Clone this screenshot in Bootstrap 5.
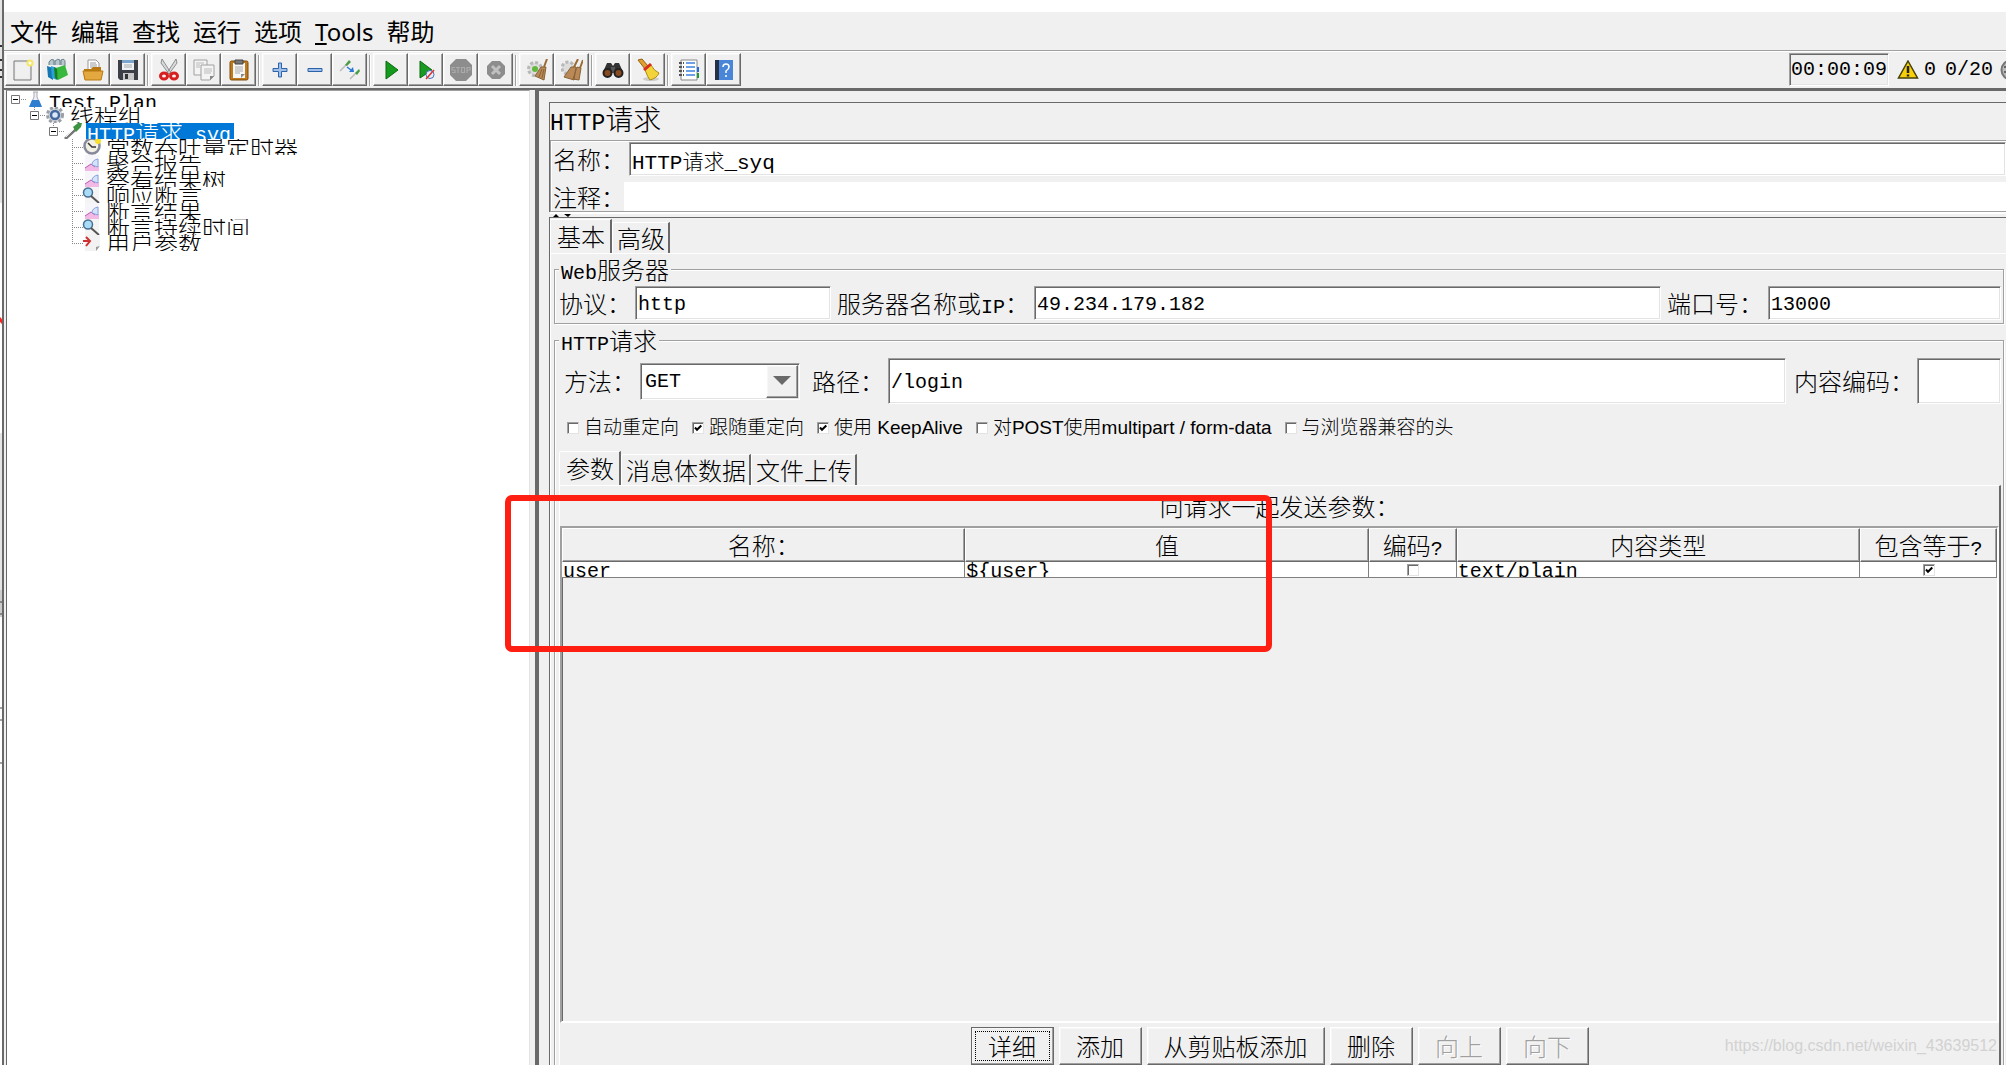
<!DOCTYPE html>
<html lang="zh-CN">
<head>
<meta charset="utf-8">
<meta name="viewport" content="width=device-width, initial-scale=1">
<title>HTTP请求</title>
<link href="https://cdn.jsdelivr.net/npm/bootstrap@5.3.0/dist/css/bootstrap.min.css" rel="stylesheet">
<style>
:root{--face:#f0f0f0;--mid:#a0a0a0;--dark:#696969;--lite:#e3e3e3}
body{font:24px/24px "Noto Sans CJK SC",sans-serif;font-weight:300;color:#000;background:#fff;overflow:hidden}
label{white-space:nowrap;flex:none}
.lat{font-family:"Liberation Mono",monospace;font-size:20px;line-height:0}
.app-col{min-width:0;border-left:2px solid var(--dark)}
.top-gap{height:12px}
.menubar{height:40px;padding-left:6px;gap:13px;background:var(--face);border-bottom:1px solid #fff;box-shadow:inset 0 -1px var(--mid)}
.menubar a{color:#000;text-decoration:none;font-family:"Noto Sans","Noto Sans CJK SC",sans-serif;font-weight:400}
.toolbar{height:36px;padding:1px 0 2px 1px;background:var(--face)}
.tgroup{margin-right:6px;position:relative}
.tgroup:not(:last-of-type)::after{content:"";position:absolute;right:-4px;top:2px;bottom:0;width:2px;background:var(--mid);border-right:1px solid #fff}
.bevel{background:var(--face);border:1px solid;border-color:#fff var(--dark) var(--dark) #fff;box-shadow:inset -1px -1px var(--mid),inset 1px 1px #f7f7f7;border-radius:0;padding:0;color:#000}
.tbtn{width:35px;height:33px;display:flex;align-items:center;justify-content:center}
.sunk,.field{border:1px solid;border-color:var(--mid) #fff #fff var(--mid);box-shadow:inset 1px 1px var(--dark),inset -1px -1px var(--lite);border-radius:0}
.status .lat{line-height:24px}
.status .clock{width:100px;height:33px;padding:0 1px}
.status .warn{margin:0 5px 0 8px}
.status .total{margin:0 7px 0 9px}
.field{background:#fff;min-width:0;height:34px;padding:4px 2px 2px;color:#000;font-family:"Liberation Mono","Noto Sans CJK SC",monospace;font-size:20px;line-height:24px;outline:0}
.field.mixed{font-size:21px;font-weight:300}
.main{min-height:0;border-top:2px solid var(--dark);background:var(--face)}
.tree-pane{width:524px;background:#fff;border-left:1px solid var(--dark);border-top:1px solid var(--mid);border-right:1px solid var(--lite);margin-left:2px}
.tree-pane ul{list-style:none;margin:0;padding:0}
.tnode{height:16px;overflow:hidden;display:flex;align-items:center;white-space:nowrap}
.tnode svg{flex:none}
.tnode .ttext{line-height:24px;margin-left:5px}
.tnode .tsel{background:#0078d7;color:#fff;width:148px;margin-left:3px;padding-left:1px}
.lv1{padding-left:4px}.lv2{padding-left:23px}.lv3{padding-left:42px}.lv4{padding-left:64px}
.split{width:5px}
.work{min-width:0;border-left:4px solid var(--dark);border-top:1px solid var(--dark);padding:11px 0 0 10px}
.frame-box{border-left:1px solid var(--dark);border-top:1px solid var(--dark);min-height:0}
.ptitle{height:37px;font-size:28px;line-height:31px;font-weight:300}
.ptitle .lat{font-size:23px}
.namebox{border:1px solid var(--mid);border-right:0;box-shadow:inset 1px 1px #fff,0 2px #fff;padding-top:1px}
.namebox label{width:78px;padding-left:2px}
.namebox .notes{margin-top:6px}
.namebox .notes label{width:73px}
.comment{border:0;height:29px;box-shadow:none}
.grip{height:5px;padding:2px 0 0 3px}
.grip svg{display:block}
.tabs{height:35px;border:0;align-items:flex-end;flex-wrap:nowrap}
.tabs .nav-link{color:#000;border:0;border-top:1px solid #fff;border-left:1px solid #fff;border-right:2px solid var(--dark);border-radius:2px 0 0 0;margin:0;padding:3px 3px 3px 4px;height:31px;line-height:24px;white-space:nowrap;background:var(--face)}
.tabs .nav-link.active{color:#000;background:var(--face);border-color:#fff var(--dark) #fff #fff;height:34px;padding:4px 5px 5px 6px}
.pane{border-top:1px solid #fff;border-left:1px solid #fff;min-height:0}
.basic{padding:3px 2px 0 3px}
.group{border:1px solid var(--mid);box-shadow:1px 1px #fff,inset 1px 1px #fff;margin:0;padding:0 2px 0 4px;min-width:0}
.group legend{float:none;width:auto;margin:0;padding:0 2px;font-size:24px;line-height:24px;background:var(--face)}
.server-row{padding:5px 0 3px}
.server-row label{width:76px}
.server-row label.host{width:203px;padding-left:6px}
.server-row label.port{width:107px;padding-left:6px}
.f-proto{width:196px}
.f-port{width:233px}
.request{border-bottom:0;margin-top:4px;min-height:0}
.path-row{padding:6px 0 0 5px}
.path-row label{width:76px}
.path-row label.path{width:88px;padding-left:12px}
.path-row label.enc{width:131px;padding-left:8px}
.path-row>.field{height:46px}
.f-enc{width:84px}
.combo{position:relative;width:160px;height:37px}
.combo select{display:block;width:100%;height:100%;appearance:none;padding:6px 4px 4px}
.combo .arrow{position:absolute;right:2px;top:2px;bottom:2px;width:32px;pointer-events:none}
.tick{appearance:none;width:12px;height:12px;margin:0;background:#fff;border:1px solid;border-color:var(--mid) var(--lite) var(--lite) var(--mid);box-shadow:inset 1px 1px var(--dark);flex:none}
.tick:checked{background:#fff url("data:image/svg+xml,%3Csvg xmlns='http://www.w3.org/2000/svg' viewBox='0 0 10 10'%3E%3Cpath d='M2 4.5 4 6.8 8.3 2.5' fill='none' stroke='%23000' stroke-width='2'/%3E%3C/svg%3E")}
.opts{font-family:"Liberation Sans","Noto Sans CJK SC",sans-serif;font-size:19px;gap:13px;padding:12px 0 10px 8px}
.opts label{display:flex;align-items:center;gap:5px}
.params{border-right:2px solid var(--dark)}
.ptext{padding:8px 0;text-align:center}
.scrollbox{border:2px solid;border-color:var(--mid) #fff #fff var(--mid);box-shadow:inset 1px 1px var(--dark);min-height:0}
.grid{width:100%;table-layout:fixed;border-collapse:separate;border-spacing:0}
.grid .c-enc{width:88px}.grid .c-eq{width:137px}
.grid th{height:34px;padding:0;text-align:center;font-weight:300;background:var(--face);border:1px solid;border-color:#fff var(--dark) var(--dark) #fff;box-shadow:inset -1px -1px var(--mid)}
.grid td{padding:0;background:#fff;border-right:1px solid #808080;border-bottom:1px solid #808080}
.cellbox{height:15px;overflow:hidden;display:flex;align-items:center;padding-left:1px;white-space:nowrap}
.cellbox .lat{line-height:24px;padding-top:4px}
.actions{gap:5px;padding-top:4px}
.actions button{height:38px;min-width:83px;padding:0 16px;font-weight:300;line-height:24px;white-space:nowrap}
.actions button:disabled{color:#a0a0a0;text-shadow:1px 1px #fff}
.actions .def{border-color:var(--dark);position:relative}
.actions .def::after{content:"";position:absolute;inset:3px;border:1px dotted #000}
.marker{position:absolute;left:505px;top:495px;width:767px;height:157px;border:6px solid #ff1e12;border-radius:7px;pointer-events:none}
.wmark{position:absolute;right:9px;bottom:8px;font:16px/22px "Liberation Sans",sans-serif;color:#d2d2d2}
</style>
<script src="https://cdn.jsdelivr.net/npm/bootstrap@5.3.0/dist/js/bootstrap.bundle.min.js"></script>
</head>
<body class="vh-100 d-flex position-relative">
<svg width="2" height="1065" class="flex-shrink-0" aria-hidden="true"><path fill="#e4e4e4" d="M0 0h2v1065H0z"/><path fill="#fff" d="M0 203h2v230H0zM0 590h2v475H0z"/><path d="M0 46h2M0 60h2M0 70h2M0 77h2" stroke="#333" stroke-width="2"/><path d="M-1 318l4 5" stroke="#f22" stroke-width="3"/><path fill="#ccc" d="M0 590h2v27H0z"/><path d="M0 602h2M0 614h2M0 708h2M0 720h2M0 763h2" stroke="#444" stroke-width="1"/></svg>
<div class="app-col flex-grow-1 d-flex flex-column">
  <div class="top-gap flex-shrink-0"></div>
  <nav class="menubar d-flex align-items-center flex-shrink-0">
    <a href="#">文件</a><a href="#">编辑</a><a href="#">查找</a><a href="#">运行</a><a href="#">选项</a><a href="#"><u>T</u>ools</a><a href="#">帮助</a>
  </nav>
  <div class="toolbar d-flex flex-shrink-0" role="toolbar">
    <div class="tgroup d-flex">
      <button class="bevel tbtn" aria-label="新建"><svg width="22" height="22" viewBox="0 0 22 22"><path d="M2 2h17v19H2z" fill="#ececec" stroke="#777"/><path d="M4 4h13v15H4z" fill="#f0f0f0"/><circle cx="18" cy="4" r="3.5" fill="#f5e663"/><circle cx="18" cy="4" r="1.5" fill="#fff"/></svg></button>
      <button class="bevel tbtn" aria-label="模板"><svg width="24" height="24" viewBox="0 0 24 24"><path d="M3 7V4q2-4 5-2v5M9 7V3q3-3 5-1v5M15 7V2q4-2 4 2v4" fill="#b9c6cc" stroke="#67808c"/><path d="M1 8l6 2v12l-5-3z" fill="#1476b0"/><path d="M5 8l6 2v12l-5-2z" fill="#2c9fd6"/><path d="M10 10l9-3 3 10-10 5z" fill="#38b83c"/><path d="M8 9l3 2 1 11-3-2z" fill="#14801c"/></svg></button>
      <button class="bevel tbtn" aria-label="打开"><svg width="22" height="22" viewBox="0 0 22 22"><path d="M6 1h8l3 3v9H6z" fill="#fff" stroke="#999"/><path d="M8 4h6M8 6h7M8 8h7" stroke="#999"/><path d="M2 10h7l2-2h8v12H2z" fill="#b87910"/><path d="M1 12h20l-2 9H3z" fill="#e3a840" stroke="#b87910"/></svg></button>
      <button class="bevel tbtn" aria-label="保存"><svg width="22" height="22" viewBox="0 0 22 22"><path d="M1 1h20v20H3l-2-2z" fill="#3c4046"/><path d="M5 1h12v10H5z" fill="#eef2f6"/><path d="M5 1h12v3H5z" fill="#7aa5cc"/><path d="M7 6h8M7 8h8" stroke="#aaa"/><path d="M6 14h11v7H6z" fill="#c8c8c8"/><path d="M8 15h3v5H8z" fill="#333"/></svg></button>
    </div>
    <div class="tgroup d-flex">
      <button class="bevel tbtn" aria-label="剪切"><svg width="22" height="22" viewBox="0 0 22 22"><path d="M4 0l9 14-2 1L3 4zM18 0L9 14l2 1 8-11z" fill="#d8dadc" stroke="#777" stroke-width=".8"/><g fill="none" stroke="#d81e1e" stroke-width="3"><ellipse cx="6" cy="17" rx="3.500" ry="3"/><ellipse cx="16" cy="17" rx="3.500" ry="3"/></g></svg></button>
      <button class="bevel tbtn" aria-label="复制"><svg width="24" height="24" viewBox="0 0 24 24"><g fill="#f4f4f4" stroke="#a0a0a0"><path d="M2 2h13v15H2z"/><path d="M9 7h13v11l-4 4H9z"/></g><path d="M12 11h8M12 13h8M12 15h7M4 5h8M4 7h4M4 9h4" stroke="#bbb"/><path d="M22 18h-4v4z" fill="#888"/></svg></button>
      <button class="bevel tbtn" aria-label="粘贴"><svg width="22" height="22" viewBox="0 0 22 22"><rect x="2" y="2" width="18" height="19" rx="1.5" fill="#bf7a1b" stroke="#7d4b0b"/><path d="M5 4h12v15H5z" fill="#f7f7f7"/><path d="M7 1h8v4H7z" fill="#777" stroke="#444"/><path d="M7 8h8M7 10h8M7 12h8M7 14h5" stroke="#aaa"/><path d="M17 15h-4v4z" fill="#888"/></svg></button>
    </div>
    <div class="tgroup d-flex">
      <button class="bevel tbtn" aria-label="展开"><svg width="16" height="16" viewBox="0 0 16 16"><path d="M6.500 1h3v5.500H15v3H9.500V15h-3V9.500H1v-3h5.500z" fill="#9dbfe8" stroke="#2e62a8"/></svg></button>
      <button class="bevel tbtn" aria-label="折叠"><svg width="16" height="16" viewBox="0 0 16 16"><path d="M1 6.500h14v3H1z" fill="#9dbfe8" stroke="#2e62a8"/></svg></button>
      <button class="bevel tbtn" aria-label="切换"><svg width="24" height="22" viewBox="0 0 24 22"><path d="M2 12l7-7M12 20l6-6" stroke="#bbb" stroke-width="1.500"/><path d="M7 6l4-5 2 2-4 4zM17 14l4-4 1 2-3 4z" fill="#4a9c46"/><path d="M9 8l4 3" stroke="#2878d8" stroke-width="1.500"/><path d="M16 13l-5 0 4-5z" fill="#2878d8"/></svg></button>
    </div>
    <div class="tgroup d-flex">
      <button class="bevel tbtn" aria-label="启动"><svg width="20" height="20" viewBox="0 0 20 20"><path d="M5 1l12 9-12 9z" fill="#149a1c" stroke="#0c6812"/></svg></button>
      <button class="bevel tbtn" aria-label="不停顿启动"><svg width="20" height="20" viewBox="0 0 20 20"><path d="M4 1l12 9-12 8z" fill="#1a9a22" stroke="#0c6812"/><circle cx="14" cy="14.500" r="4" fill="#e8eef8" stroke="#456fb8"/><path d="M10 19l8-9" stroke="#e03030" stroke-width="1.500"/></svg></button>
      <button class="bevel tbtn" aria-label="停止"><svg width="24" height="24" viewBox="0 0 24 24"><path d="M7 1h10l6 6v10l-6 6H7l-6-6V7z" fill="#8d8d8d"/><path d="M6 9.500H3V12h3v2.500H3M7 9.500h4M9 9.500V15M12.500 9.500h3v5h-3zM18 15V9.500h3V12h-3" stroke="#aaa" stroke-width="1.200" fill="none"/></svg></button>
      <button class="bevel tbtn" aria-label="关闭"><svg width="20" height="20" viewBox="0 0 20 20"><path d="M6 1h8l5 5v8l-5 5H6l-5-5V6z" fill="#8d8d8d"/><path d="M6 6l8 8M14 6l-8 8" stroke="#c0c0c0" stroke-width="3"/></svg></button>
    </div>
    <div class="tgroup d-flex">
      <button class="bevel tbtn" aria-label="清除"><svg width="22" height="22" viewBox="0 0 22 22"><circle cx="9" cy="10" r="6.500" fill="#ddd" stroke="#b8b8b8" stroke-width="3" stroke-dasharray="3 2"/><circle cx="9" cy="10" r="3" fill="#62b83c"/><path d="M21 0l-3 8" stroke="#9a6a32" stroke-width="2"/><path d="M15 8l5 0-2 13-9-4z" fill="#b98a58" stroke="#8a6236"/><path d="M16 10l-3 8M18 10l-2 9" stroke="#8a6236"/></svg></button>
      <button class="bevel tbtn" aria-label="清除全部"><svg width="22" height="22" viewBox="0 0 22 22"><circle cx="7" cy="9" r="6" fill="#ddd" stroke="#b8b8b8" stroke-width="3" stroke-dasharray="3 2"/><path d="M17 0l-4 8M22 1l-3 8" stroke="#9a6a32" stroke-width="2"/><path d="M10 8l5 0-2 13-10-3zM16 8l4 1-2 12-6-1z" fill="#b98a58" stroke="#8a6236"/></svg></button>
    </div>
    <div class="tgroup d-flex">
      <button class="bevel tbtn" aria-label="查找"><svg width="22" height="22" viewBox="0 0 22 22"><path d="M5 4h4l2 3 2-3h4l4 9H1z" fill="#333"/><path d="M9 8h4v6H9z" fill="#555"/><circle cx="5.500" cy="14" r="4" fill="#8c4a20" stroke="#222" stroke-width="2"/><circle cx="16.500" cy="14" r="4" fill="#8c4a20" stroke="#222" stroke-width="2"/></svg></button>
      <button class="bevel tbtn" aria-label="重置查找"><svg width="24" height="24" viewBox="0 0 24 24"><ellipse cx="15" cy="21" rx="8" ry="2" fill="#ccc"/><path d="M2 2l4-1 6 7-3 3z" fill="#e0a030" stroke="#95610c"/><path d="M9 12l6-5q3 6 8 8-2 5-9 7-2-2-5-10z" fill="#f3d33a" stroke="#b08a10"/><path d="M7 11l7-6 2 2-7 6z" fill="#d82c20"/></svg></button>
    </div>
    <div class="tgroup d-flex">
      <button class="bevel tbtn" aria-label="函数助手"><svg width="22" height="22" viewBox="0 0 22 22"><path d="M3 1h16v20H3z" fill="#fff" stroke="#888"/><path d="M1 4h5M1 8h5M1 12h5M1 16h5" stroke="#555" stroke-width="2" stroke-dasharray="3 1"/><path d="M8 4h9M8 8h9M8 12h9M8 16h9" stroke="#3c82e0" stroke-width="1.500"/><path d="M19 8h2v5h-2z" fill="#2468e8"/><path d="M19 14h2v5h-2z" fill="#1d9a30"/></svg></button>
      <button class="bevel tbtn" aria-label="帮助"><svg width="20" height="22" viewBox="0 0 20 22"><path d="M1 1h18v20H1z" fill="#4a86d8"/><path d="M1 1h4v20H1z" fill="#243044"/><path d="M9 8q0-3 3-3t3 3q0 2-3 4v2M12 16v2" fill="none" stroke="#fff" stroke-width="1.500"/></svg></button>
    </div>
    <section class="status d-flex align-items-center ms-auto overflow-hidden">
      <div class="clock sunk d-flex align-items-center lat">00:00:09</div>
      <svg class="warn" width="22" height="20" viewBox="0 0 22 20"><path d="M11 1l9.500 17H1.500z" fill="#f8cf08" stroke="#44400a" stroke-width="1.500"/><path d="M11 6v7M11 14.500v2" stroke="#222" stroke-width="2.500"/></svg>
      <span class="lat">0</span><span class="lat total">0/20</span>
      <svg width="6" height="22" viewBox="0 0 6 22"><circle cx="11" cy="11" r="9.500" fill="#bbb" stroke="#777" stroke-width="2"/><path d="M4 8h3M4 13h3" stroke="#666" stroke-width="2"/></svg>
    </section>
  </div>
  <div class="main d-flex flex-grow-1">
    <div class="tree-pane flex-shrink-0">
      <ul>
        <li class="tnode lv1"><svg width="33" height="16"><path d="M10 8.500h6" stroke="#888" stroke-dasharray="1 1"/><path d="M.5 4.500h8v8h-8z" fill="#fff" stroke="#777"/><path d="M2 8.500h5" stroke="#000"/><path d="M22 1h5M23 1v5l-4 9h11l-4-9V1" fill="#eef" stroke="#aaa"/><path d="M21 9h7l3 7H18z" fill="#2f7fd0"/></svg><span class="ttext"><span class="lat">Test Plan</span></span></li>
        <li class="tnode lv2"><svg width="35" height="16"><path d="M10 8.500h6M4.500 0v3" stroke="#888" stroke-dasharray="1 1"/><path d="M.5 4.500h8v8h-8z" fill="#fff" stroke="#777"/><path d="M2 8.500h5" stroke="#000"/><circle cx="25" cy="8" r="7.500" fill="#d4d8dc" stroke="#9a9fa6" stroke-width="3" stroke-dasharray="3 2"/><circle cx="25" cy="8" r="4" fill="#dce8f8" stroke="#4668a0" stroke-width="2.500"/></svg><span class="ttext">线程组</span></li>
        <li class="tnode lv3"><svg width="34" height="16"><path d="M10 8.500h6M4.500 0v3" stroke="#888" stroke-dasharray="1 1"/><path d="M.5 4.500h8v8h-8z" fill="#fff" stroke="#777"/><path d="M2 8.500h5" stroke="#000"/><path d="M16 16l11-10" stroke="#777" stroke-width="3"/><path d="M17 14l9-9" stroke="#eee"/><path d="M24 4l5-4h4l-1 4-5 5z" fill="#3d9440"/></svg><span class="ttext tsel"><span class="lat">HTTP</span>请求<span class="lat">_syq</span></span></li>
        <li class="tnode lv4"><svg width="30" height="16"><path d="M1.500 0v16M1 8.500h11" stroke="#888" stroke-dasharray="1 1"/><circle cx="21" cy="7" r="7.500" fill="#f2f0e2" stroke="#888a9c" stroke-width="2.500"/><path d="M17 4l4 4 4 0" stroke="#333" fill="none" stroke-width="1.500"/><circle cx="27" cy="2" r="3" fill="#f8e02a"/></svg><span class="ttext">常数吞吐量定时器</span></li>
        <li class="tnode lv4"><svg width="30" height="16"><path d="M1.500 0v16M1 8.500h11" stroke="#888" stroke-dasharray="1 1"/><path d="M14 0h14v16H14z" fill="#f6f6fa"/><path d="M14 16v-3l6-4 4 3 4-1v5z" fill="#f2b8e6"/><path d="M14 13l6-4 4 3" fill="none" stroke="#b85aa8"/><path d="M21 10q0-5 6-6v8z" fill="#d4e4fc" stroke="#8aa0dc"/></svg><span class="ttext">聚合报告</span></li>
        <li class="tnode lv4"><svg width="30" height="16"><path d="M1.500 0v16M1 8.500h11" stroke="#888" stroke-dasharray="1 1"/><path d="M14 0h14v16H14z" fill="#f6f6fa"/><path d="M14 16v-3l6-4 4 3 4-1v5z" fill="#f2b8e6"/><path d="M14 13l6-4 4 3" fill="none" stroke="#b85aa8"/><path d="M21 10q0-5 6-6v8z" fill="#d4e4fc" stroke="#8aa0dc"/></svg><span class="ttext">察看结果树</span></li>
        <li class="tnode lv4"><svg width="30" height="16"><path d="M1.500 0v16M1 8.500h11" stroke="#888" stroke-dasharray="1 1"/><path d="M14 0h14v16H14z" fill="#f4f4f4"/><circle cx="17" cy="5.500" r="4.500" fill="#a8dcf8" stroke="#4a7090" stroke-width="1.500"/><path d="M20 9l8 7" stroke="#555" stroke-width="2"/></svg><span class="ttext">响应断言</span></li>
        <li class="tnode lv4"><svg width="30" height="16"><path d="M1.500 0v16M1 8.500h11" stroke="#888" stroke-dasharray="1 1"/><path d="M14 0h14v16H14z" fill="#f6f6fa"/><path d="M14 16v-3l6-4 4 3 4-1v5z" fill="#f2b8e6"/><path d="M14 13l6-4 4 3" fill="none" stroke="#b85aa8"/><path d="M21 10q0-5 6-6v8z" fill="#d4e4fc" stroke="#8aa0dc"/></svg><span class="ttext">断言结果</span></li>
        <li class="tnode lv4"><svg width="30" height="16"><path d="M1.500 0v16M1 8.500h11" stroke="#888" stroke-dasharray="1 1"/><path d="M14 0h14v16H14z" fill="#f4f4f4"/><circle cx="17" cy="5.500" r="4.500" fill="#a8dcf8" stroke="#4a7090" stroke-width="1.500"/><path d="M20 9l8 7" stroke="#555" stroke-width="2"/></svg><span class="ttext">断言持续时间</span></li>
        <li class="tnode lv4"><svg width="30" height="16"><path d="M1.500 0v8M1 8.500h11" stroke="#888" stroke-dasharray="1 1"/><path d="M14 0h15v11l-4 5H14z" fill="#f2f2f2"/><path d="M29 11l-4 1v4z" fill="#999"/><path d="M12 6h6M15 2l4 4-4 5" stroke="#d03030" stroke-width="2" fill="none"/></svg><span class="ttext">用户参数</span></li>
      </ul>
    </div>
    <div class="split flex-shrink-0"></div>
    <div class="work flex-grow-1 d-flex flex-column">
      <div class="frame-box flex-shrink-0">
        <h1 class="ptitle m-0"><span class="lat">HTTP</span>请求</h1>
        <div class="namebox">
          <div class="d-flex align-items-center"><label for="nm">名称：</label><input id="nm" class="field mixed flex-grow-1" value="HTTP请求_syq"></div>
          <div class="notes d-flex align-items-center"><label for="cm">注释：</label><input id="cm" class="field comment flex-grow-1"></div>
        </div>
      </div>
      <div class="grip flex-shrink-0"><svg width="20" height="3"><path d="M1 3l3-3 3 3zM12 0h7l-3 3z"/></svg></div>
      <div class="frame-box flex-grow-1 d-flex flex-column">
        <ul class="nav nav-tabs tabs flex-shrink-0">
          <li><a class="nav-link active" href="#">基本</a></li><li><a class="nav-link" href="#">高级</a></li>
        </ul>
        <div class="pane basic flex-grow-1 d-flex flex-column">
          <fieldset class="group flex-shrink-0">
            <legend><span class="lat">Web</span>服务器</legend>
            <div class="server-row d-flex align-items-center">
              <label for="pr">协议：</label><input id="pr" class="field f-proto" value="http">
              <label for="sv" class="host">服务器名称或<span class="lat">IP</span>：</label><input id="sv" class="field flex-grow-1" value="49.234.179.182">
              <label for="pt" class="port">端口号：</label><input id="pt" class="field f-port" value="13000">
            </div>
          </fieldset>
          <fieldset class="group request flex-grow-1 d-flex flex-column">
            <legend><span class="lat">HTTP</span>请求</legend>
            <div class="path-row d-flex align-items-center">
              <label for="mt">方法：</label>
              <div class="combo"><select id="mt" class="field"><option>GET</option></select><span class="arrow bevel d-flex align-items-center justify-content-center"><svg width="18" height="10"><path d="M0 0h18l-9 9z" fill="#696969"/></svg></span></div>
              <label for="pa" class="path">路径：</label><input id="pa" class="field flex-grow-1" value="/login">
              <label for="en" class="enc">内容编码：</label><input id="en" class="field f-enc">
            </div>
            <div class="opts d-flex">
              <label><input type="checkbox" class="tick">自动重定向</label>
              <label><input type="checkbox" class="tick" checked>跟随重定向</label>
              <label><input type="checkbox" class="tick" checked>使用 KeepAlive</label>
              <label><input type="checkbox" class="tick">对POST使用multipart / form-data</label>
              <label><input type="checkbox" class="tick">与浏览器兼容的头</label>
            </div>
            <ul class="nav nav-tabs tabs flex-shrink-0">
              <li><a class="nav-link active" href="#">参数</a></li><li><a class="nav-link" href="#">消息体数据</a></li><li><a class="nav-link" href="#">文件上传</a></li>
            </ul>
            <div class="pane params flex-grow-1 d-flex flex-column">
              <div class="ptext">向请求一起发送参数：</div>
              <div class="scrollbox flex-grow-1">
                <table class="grid">
                  <colgroup><col><col><col class="c-enc"><col><col class="c-eq"></colgroup>
                  <thead><tr><th>名称：</th><th>值</th><th>编码<span class="lat">?</span></th><th>内容类型</th><th>包含等于<span class="lat">?</span></th></tr></thead>
                  <tbody><tr>
                    <td><div class="cellbox"><span class="lat">user</span></div></td>
                    <td><div class="cellbox"><span class="lat">${user}</span></div></td>
                    <td><div class="cellbox justify-content-center"><input type="checkbox" class="tick" aria-label="编码?"></div></td>
                    <td><div class="cellbox"><span class="lat">text/plain</span></div></td>
                    <td><div class="cellbox justify-content-center"><input type="checkbox" class="tick" checked aria-label="包含等于?"></div></td>
                  </tr></tbody>
                </table>
              </div>
              <div class="actions d-flex justify-content-center flex-shrink-0">
                <button class="bevel def">详细</button><button class="bevel">添加</button><button class="bevel">从剪贴板添加</button><button class="bevel">删除</button><button class="bevel" disabled>向上</button><button class="bevel" disabled>向下</button>
              </div>
            </div>
          </fieldset>
        </div>
      </div>
    </div>
  </div>
</div>
<div class="marker"></div>
<div class="wmark">https://blog.csdn.net/weixin_43639512</div>
</body>
</html>
